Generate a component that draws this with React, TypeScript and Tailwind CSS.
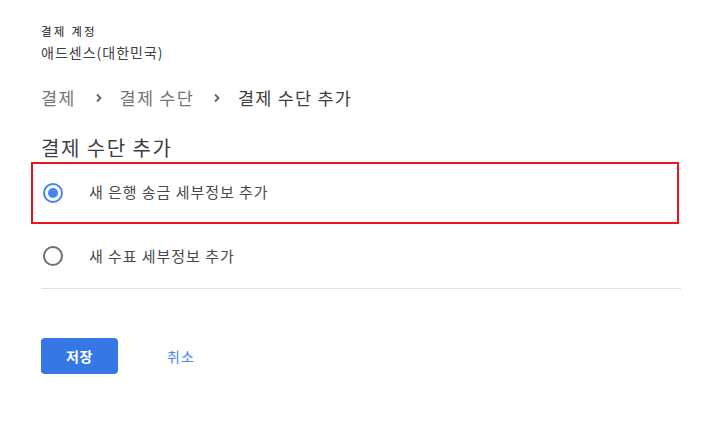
import React from "react";

const font = { fontFamily: '"Noto Sans CJK KR", "Noto Sans", sans-serif' };

function Chevron() {
  return (
    <svg width="8" height="10" viewBox="0 0 8 10" className="ml-[19px] mr-[17px]">
      <path d="M2 1.5 L5.5 5 L2 8.5" fill="none" stroke="#5f6368" strokeWidth="1.8" />
    </svg>
  );
}

function Radio({ checked }: { checked?: boolean }) {
  return (
    <svg width="22" height="22" viewBox="0 0 22 22">
      <circle cx="11" cy="11" r="9" fill="none" stroke={checked ? "#4285f4" : "#6e6e6e"} strokeWidth="2" />
      {checked && <circle cx="11" cy="11" r="5" fill="#4285f4" />}
    </svg>
  );
}

export default function App() {
  return (
    <div className="w-[716px] h-[421px] bg-white pl-[41px] pr-[35px]" style={font}>
      <div className="pt-[22px] text-[11.5px] leading-[18px] tracking-[2.2px] text-[#202124]">결제 계정</div>
      <div className="text-[14px] leading-[22px] tracking-[1px] text-[#3c4043] mt-[1px]">애드센스(대한민국)</div>
      <div className="flex items-center mt-[22px] text-[17.5px] leading-[26px] tracking-[1.2px] text-[#757575]">
        <span>결제</span>
        <Chevron />
        <span>결제 수단</span>
        <Chevron />
        <span className="text-[#3c4043]">결제 수단 추가</span>
      </div>
      <div className="mt-[23px] text-[20px] leading-[28px] tracking-[1.5px] text-[#3c4043]">결제 수단 추가</div>
      <div className="relative flex items-center h-[62px] border-b border-[#e0e0e0] text-[15px] tracking-[0.95px] text-[#4a4a4a]">
        <div className="ml-[1px]"><Radio checked /></div>
        <span className="ml-[25px]">새 은행 송금 세부정보 추가</span>
        <div className="absolute left-[-10px] right-[2px] top-0 bottom-[-1px] border-2 border-[#e8141f]" />
      </div>
      <div className="flex items-center h-[65px] border-b border-[#e0e0e0] text-[15px] tracking-[0.95px] text-[#4a4a4a]">
        <div className="ml-[1px]"><Radio /></div>
        <span className="ml-[25px]">새 수표 세부정보 추가</span>
      </div>
      <div className="flex items-center mt-[49px]">
        <button className="w-[77px] h-[36px] rounded-[4px] bg-[#3578e5] text-white text-[14px] tracking-[0.5px] font-bold">저장</button>
        <button className="ml-[49px] text-[14px] tracking-[1px] text-[#4285f4]">취소</button>
      </div>
    </div>
  );
}
